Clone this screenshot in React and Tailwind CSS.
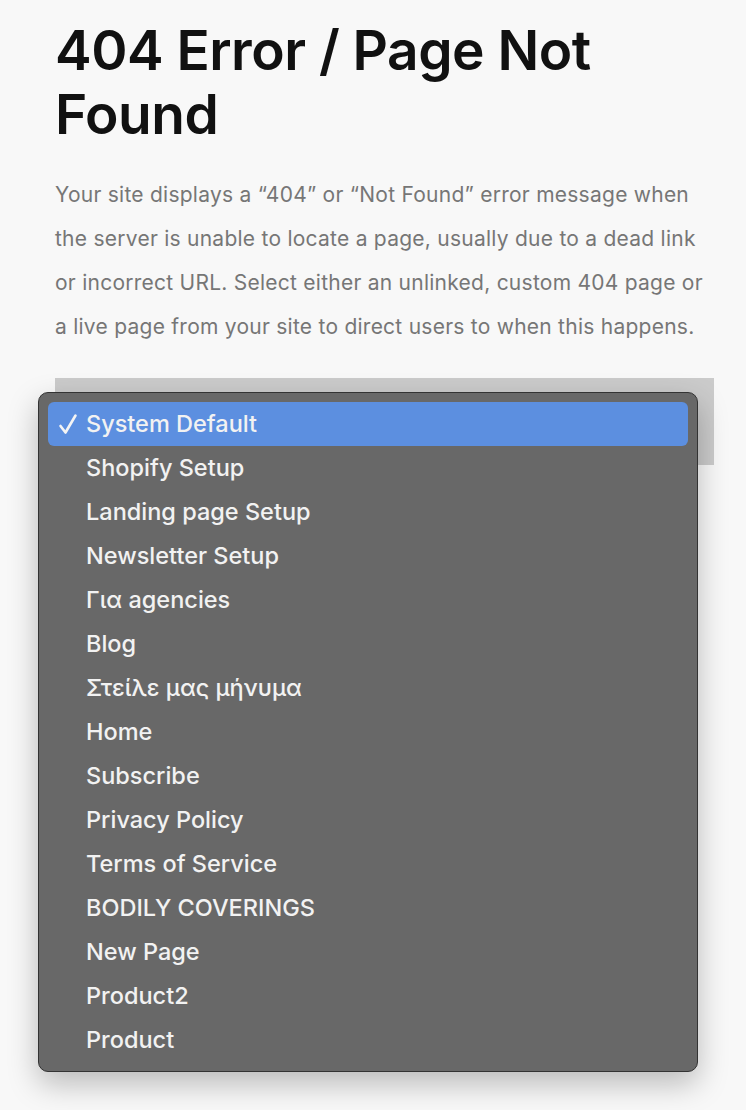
const pages = [
  'System Default',
  'Shopify Setup',
  'Landing page Setup',
  'Newsletter Setup',
  'Για agencies',
  'Blog',
  'Στείλε μας μήνυμα',
  'Home',
  'Subscribe',
  'Privacy Policy',
  'Terms of Service',
  'BODILY COVERINGS',
  'New Page',
  'Product2',
  'Product',
];

function Check() {
  return (
    <svg width="20" height="22" viewBox="0 0 20 22" fill="none" stroke="#f4f4f4" strokeWidth="2.6" strokeLinecap="round" strokeLinejoin="round">
      <path d="M2.5 13 L7.5 19.5 L17.5 2.5" />
    </svg>
  );
}

export default function App() {
  const selected = 'System Default';

  return (
    <div className="min-h-[1110px] bg-[#f8f8f8] pl-[55px] pr-[20px] pt-[18px] font-['Inter',sans-serif]">
      <h1 className="text-[55px] leading-[64px] font-semibold tracking-[-0.5px] text-[#111]">
        404 Error / Page Not Found
      </h1>

      <p className="mt-[27px] w-[655px] text-[21px] leading-[44px] text-[#767676] tracking-[0.25px]">
        Your site displays a “404” or “Not Found” error message when the server is unable to locate a page, usually due
        to a dead link or incorrect URL. Select either an unlinked, custom 404 page or a live page from your site to
        direct users to when this happens.
      </p>

      {/* select + open menu */}
      <div className="relative mt-[29px] w-[659px]">
        <div className="h-[87px] bg-[#cbcbcb]" />

        <div className="absolute left-[-17px] top-[14px] w-[660px] rounded-[10px] border border-[#333] bg-[#686868] p-[9px] shadow-[0_12px_30px_rgba(0,0,0,0.25)]">
          {pages.map((p) => {
            const on = p === selected;
            return (
              <div
                key={p}
                className={`flex h-[44px] items-center rounded-[6px] text-[23.5px] font-medium text-[#f2f2f2] ${on ? 'bg-[#5c8fe0]' : ''}`}
              >
                <span className="flex w-[38px] justify-center pl-[1px]">{on ? <Check /> : null}</span>
                <span>{p}</span>
              </div>
            );
          })}
        </div>
      </div>
    </div>
  );
}
